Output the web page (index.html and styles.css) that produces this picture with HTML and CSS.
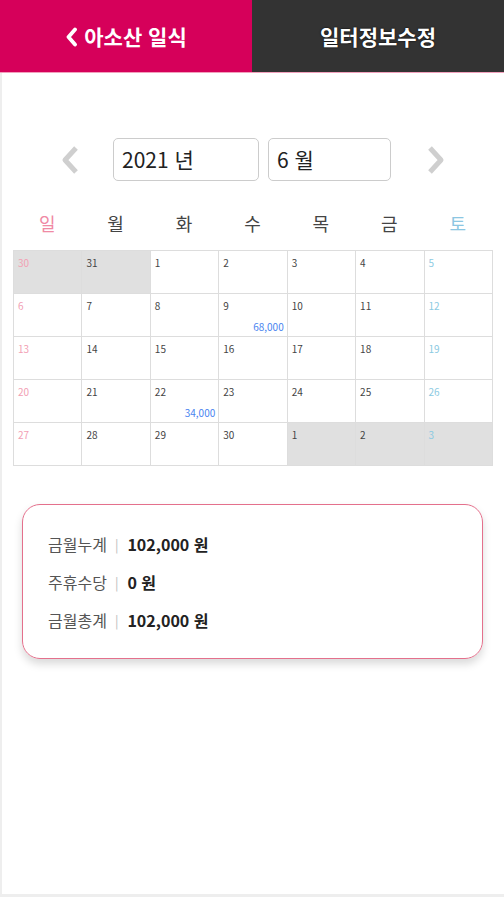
FILE: index.html
```html
<!DOCTYPE html>
<html lang="ko">
<head>
    <meta charset="UTF-8">
    <meta name="viewport" content="width=device-width, initial-scale=1.0">
    <title>아소산 일식</title>
    <link rel="stylesheet" href="styles.css">
</head>
<body>
<div class="page">
    <div class="top">
        <div class="top-left">
            <svg class="back" width="13" height="20" viewBox="0 0 13 20"><path d="M10 2.5 L3.5 10 L10 17.5" fill="none" stroke="#fff" stroke-width="3.8" stroke-linecap="round" stroke-linejoin="round"/></svg>
            아소산 일식
        </div>
        <div class="top-right">일터정보수정</div>
    </div>

    <div class="month-nav">
        <svg class="arrow" width="22" height="32" viewBox="0 0 22 32"><path d="M17 4 L6 16 L17 28" fill="none" stroke="#cfcfcf" stroke-width="5" stroke-linejoin="round"/></svg>
        <div class="field year">2021 년</div>
        <div class="field month">6 월</div>
        <svg class="arrow" width="22" height="32" viewBox="0 0 22 32"><path d="M5 4 L16 16 L5 28" fill="none" stroke="#cfcfcf" stroke-width="5" stroke-linejoin="round"/></svg>
    </div>

    <div class="weekdays">
        <span class="sun">일</span>
        <span>월</span>
        <span>화</span>
        <span>수</span>
        <span>목</span>
        <span>금</span>
        <span class="sat">토</span>
    </div>

    <table class="cal">
        <tr>
            <td class="off sun">30</td><td class="off">31</td><td>1</td><td>2</td><td>3</td><td>4</td><td class="sat">5</td>
        </tr>
        <tr>
            <td class="sun">6</td><td>7</td><td>8</td><td>9<span class="pay">68,000</span></td><td>10</td><td>11</td><td class="sat">12</td>
        </tr>
        <tr>
            <td class="sun">13</td><td>14</td><td>15</td><td>16</td><td>17</td><td>18</td><td class="sat">19</td>
        </tr>
        <tr>
            <td class="sun">20</td><td>21</td><td>22<span class="pay">34,000</span></td><td>23</td><td>24</td><td>25</td><td class="sat">26</td>
        </tr>
        <tr>
            <td class="sun">27</td><td>28</td><td>29</td><td>30</td><td class="off">1</td><td class="off">2</td><td class="off sat">3</td>
        </tr>
    </table>

    <div class="summary">
        <div class="row"><span class="label">금월누계</span><span class="bar">|</span><span class="value">102,000 원</span></div>
        <div class="row"><span class="label">주휴수당</span><span class="bar">|</span><span class="value">0 원</span></div>
        <div class="row"><span class="label">금월총계</span><span class="bar">|</span><span class="value">102,000 원</span></div>
    </div>
</div>
</body>
</html>
```

FILE: styles.css
```css
body {
    margin: 0;
    padding: 0;
    background: #fff;
    font-family: "Noto Sans CJK KR", "Noto Sans", sans-serif;
    color: #333;
}
.page {
    height: 897px;
    border-left: 2px solid #eee;
    border-bottom: 3px solid #eee;
    box-sizing: border-box;
}
.top {
    display: flex;
    height: 72px;
    margin-left: -2px;
    border-bottom: 1px solid #f2a0bc;
}
.top-left, .top-right {
    flex: 1;
    display: flex;
    align-items: center;
    justify-content: center;
    color: #fff;
    font-size: 21px;
    font-weight: bold;
}
.top-left {
    background-color: #d6005a;
    gap: 6px;
}
.top-right {
    background-color: #333;
    text-shadow: 0 0 2px #000;
}
.back {
    margin-top: 1px;
}
.month-nav {
    display: flex;
    align-items: center;
    margin-top: 65px;
    padding-left: 57px;
    height: 43px;
}
.arrow {
    flex: none;
}
.field {
    height: 43px;
    box-sizing: border-box;
    border: 1px solid #ccc;
    border-radius: 5px;
    font-size: 21px;
    line-height: 40px;
    padding-left: 8px;
    color: #222;
}
.year {
    width: 146px;
    margin-left: 32px;
}
.month {
    width: 123px;
    margin-left: 9px;
    margin-right: 34px;
}
.weekdays {
    display: flex;
    margin: 24px 12px 0 11px;
    height: 35px;
    align-items: center;
    font-size: 18px;
    color: #444;
}
.weekdays span {
    flex: 1;
    text-align: center;
}
.weekdays .sun {
    color: #f08aa4;
}
.weekdays .sat {
    color: #8cc6e2;
}
.cal {
    border-collapse: collapse;
    margin: 10px 0 0 11px;
    width: 480px;
    table-layout: fixed;
}
.cal td {
    position: relative;
    height: 32px;
    border: 1.5px solid #ddd;
    vertical-align: top;
    padding: 5px 4px;
    font-size: 10px;
    line-height: 14px;
    color: #444;
}
.cal td.off {
    background-color: #e0e0e0;
}
.cal td.sun {
    color: #f2a0b4;
}
.cal td.sat {
    color: #8ccae2;
}
.pay {
    position: absolute;
    right: 3px;
    bottom: 3px;
    font-size: 10px;
    line-height: 12px;
    color: #4a84f0;
}
.summary {
    margin: 38px 21px 0 20px;
    height: 155px;
    box-sizing: border-box;
    border: 1.5px solid #e4708c;
    border-radius: 18px;
    box-shadow: 0 5px 8px rgba(0, 0, 0, 0.15);
    padding: 20px 0 0 25px;
}
.row {
    display: flex;
    align-items: center;
    height: 38px;
    font-size: 16px;
}
.label {
    color: #555;
}
.bar {
    color: #bbb;
    font-size: 13px;
    margin: 0 9px 0 8px;
}
.value {
    font-weight: bold;
    color: #222;
}
```
